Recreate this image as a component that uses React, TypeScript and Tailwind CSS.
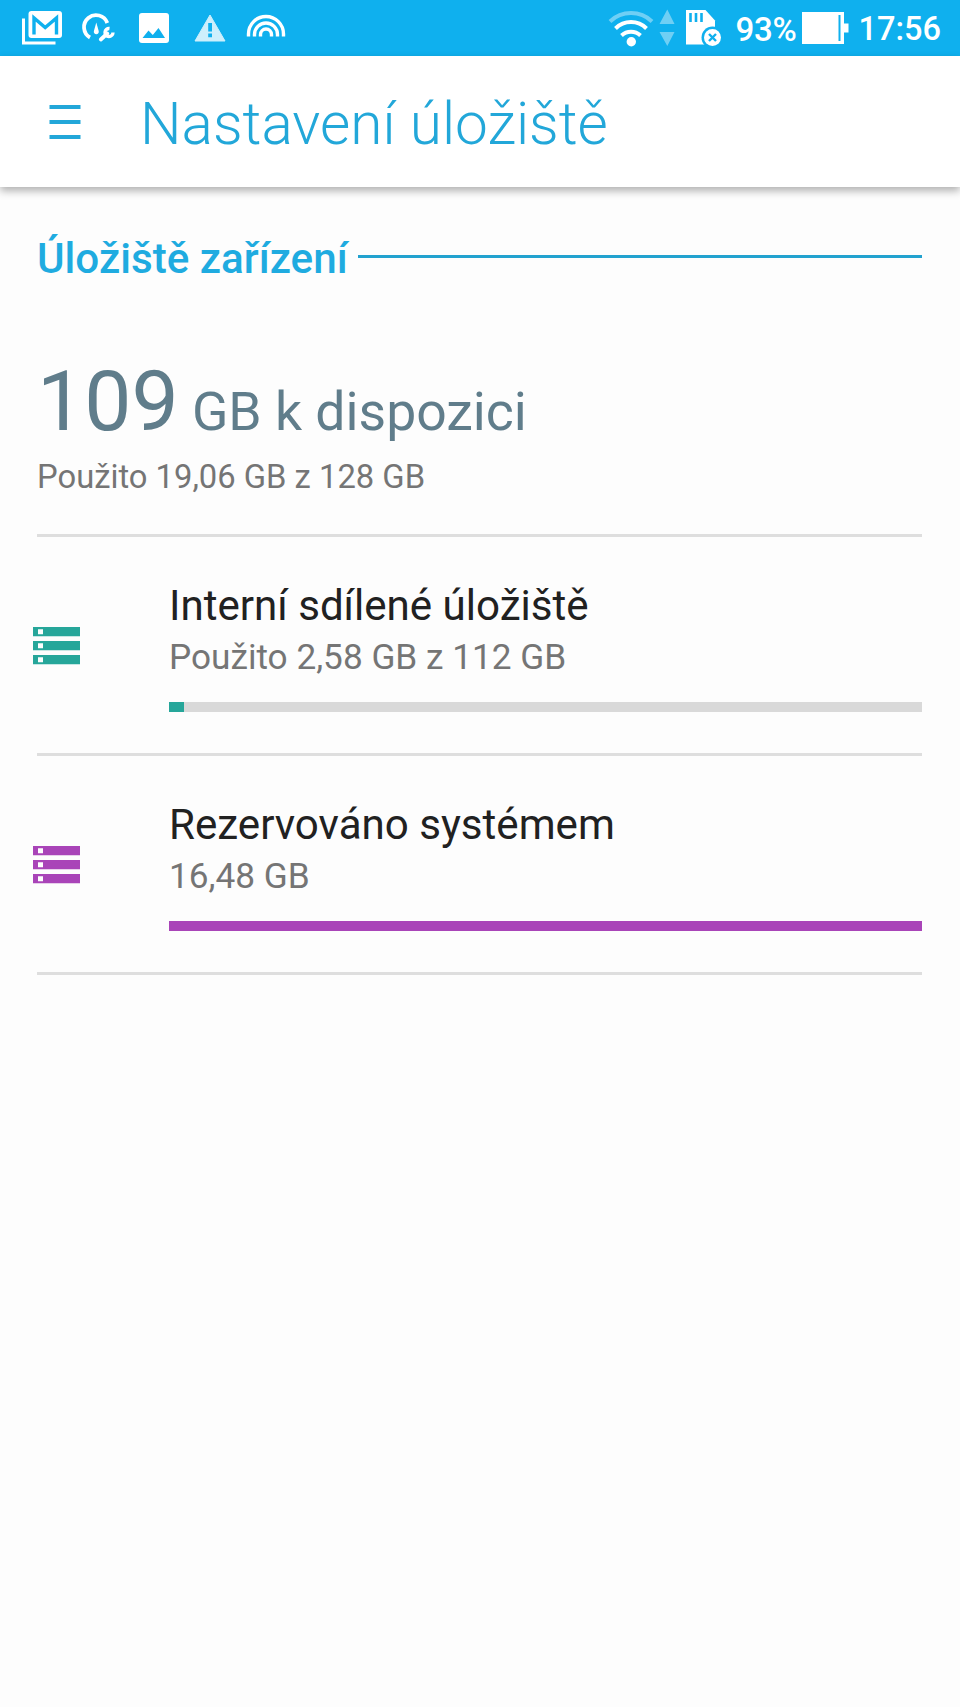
const volumes = [
  {
    name: "Interní sdílené úložiště",
    usage: "Použito 2,58 GB z 112 GB",
    percent: 2.05,
    icon: "text-[#26a69a]",
    bar: "bg-[#26a69a]",
  },
  {
    name: "Rezervováno systémem",
    usage: "16,48 GB",
    percent: 100,
    icon: "text-[#a944b8]",
    bar: "bg-[#a944b8]",
  },
];

function StorageIcon({ className }: { className: string }) {
  return (
    <svg width="48" height="38" viewBox="0 0 48 38" fill="currentColor" className={className}>
      <path fillRule="evenodd" d="M0 0h47v9.3H0zM5 2.3v4.9h5V2.3z" />
      <path fillRule="evenodd" d="M0 14h47v9.3H0zM5 16.3v4.9h5v-4.9z" />
      <path fillRule="evenodd" d="M0 28h47v9.3H0zM5 30.3v4.9h5v-4.9z" />
    </svg>
  );
}

function StatusBar() {
  return (
    <div className="flex h-14 items-center justify-between bg-[#0fb0ee] pr-[19px] pl-5 text-white">
      {/* Notifications */}
      <div className="flex items-center">
        <svg width="60" height="56" viewBox="20 0 60 56" fill="none">
          <path d="M23.5 18.5v24.5h32" stroke="white" strokeWidth="3" />
          <rect x="28.5" y="11" width="33.5" height="27" rx="3" fill="white" />
          <path d="M34 34.5V18l11.2 9.5L56.5 18v16.5" stroke="#0fb0ee" strokeWidth="3.4" />
        </svg>
        <svg width="56" height="56" viewBox="80 0 56 56" fill="none">
          <path d="M90 37.5A12 12 0 1 1 107.3 23" stroke="white" strokeWidth="3.8" />
          <path d="M96.3 22.5l2.4 8.5a2.5 2.5 0 1 1-4.8 0z" fill="white" />
          <path d="M100.8 39.5l6.5-6" stroke="white" strokeWidth="3.8" strokeLinecap="round" />
          <path d="M109.5 28.5a4 4 0 1 0 3.5 4" stroke="white" strokeWidth="3.4" />
        </svg>
        <svg width="56" height="56" viewBox="136 0 56 56">
          <rect x="139" y="13" width="30" height="30" rx="3" fill="white" />
          <path d="M142.5 38l6-7.5 4.3 4.5 5.7-7 6.5 10z" fill="#0fb0ee" />
        </svg>
        <svg width="52" height="56" viewBox="192 0 52 56">
          <path d="M210 15l15 26h-30z" fill="#cdeffc" stroke="#cdeffc" strokeLinejoin="round" />
          <path d="M208.2 23h3.8v8.5h-3.8zM208.2 33.5h3.8v3.8h-3.8z" fill="#0fb0ee" />
        </svg>
        <svg width="48" height="56" viewBox="244 0 48 56" fill="none" stroke="white" strokeWidth="3.4">
          <path d="M248.5 36.5v-2.5a17.5 17.5 0 0 1 35 0v2.5" />
          <path d="M254.5 36.5v-2a11.5 11.5 0 0 1 23 0v2" />
          <path d="M260.5 36.5v-2a5.5 5.5 0 0 1 11 0v2" />
        </svg>
      </div>

      {/* System state */}
      <div className="flex items-center">
        <svg width="48" height="56" viewBox="607 0 48 56" fill="none" stroke="white" strokeWidth="4">
          <path d="M610 21.5a30.5 30.5 0 0 1 42 0" opacity=".4" />
          <path d="M615.5 28.5a22 22 0 0 1 31 0" />
          <path d="M621.5 35.5a14 14 0 0 1 19 0" />
          <circle cx="631.3" cy="41.8" r="4.7" fill="white" stroke="none" />
        </svg>
        <svg width="28" height="56" viewBox="655 0 28 56" fill="white" opacity=".4">
          <path d="M667.3 9.5L674.5 24h-15zM667.3 46L674.5 32h-15z" />
        </svg>
        <svg width="53" height="56" viewBox="683 0 53 56" fill="none">
          <path d="M686 10h19.5l9.5 10.5v24h-29z" fill="white" />
          <path d="M690.5 13v9M696 13v9M701.5 13v9" stroke="#0fb0ee" strokeWidth="2.6" />
          <circle cx="712.5" cy="37.5" r="11" fill="#0fb0ee" />
          <circle cx="712.5" cy="37.5" r="8.5" fill="white" />
          <path d="M709 34l7 7M716 34l-7 7" stroke="#0fb0ee" strokeWidth="2.4" />
        </svg>
        <span className="w-[65px] pt-[3px] text-[33px] leading-none font-medium tracking-[-0.3px]">93%</span>
        <svg width="58" height="56" viewBox="801 0 58 56">
          <path d="M802 12h42v11.5h4.5v9H844V44h-42z" fill="white" />
          <path d="M839.5 15v26" stroke="#0fb0ee" strokeWidth="2" />
        </svg>
        <span className="pt-[3px] text-[32.5px] leading-none font-medium">17:56</span>
      </div>
    </div>
  );
}

export default function App() {
  return (
    <main className="min-h-[1707px] w-[960px] bg-[#fdfdfd] font-[Roboto,sans-serif]">
      <StatusBar />

      <header className="flex h-[131px] items-center bg-white pl-[49px] shadow-[0_4px_8px_rgba(0,0,0,0.3)]">
        <svg width="32" height="34" viewBox="0 0 32 34" className="text-[#22a7d9]" stroke="currentColor" strokeWidth="4">
          <path d="M.5 2h31M.5 17h31M.5 32h31" />
        </svg>
        <h1 className="pt-[5px] pl-[59px] text-[58.5px] leading-none font-light text-[#22a7d9]">Nastavení úložiště</h1>
      </header>

      <section className="pr-[38px] pl-[37px]">
        <div className="flex items-center gap-[10px] pt-[47px]">
          <h2 className="text-[42.2px] leading-[50px] font-medium text-[#1fabe0]">Úložiště zařízení</h2>
          <div className="mb-[5px] h-[3px] flex-1 bg-[#22a2cf]" />
        </div>

        <div className="mt-[76px] text-[#607d8b]">
          <p className="text-[53.5px] leading-[84px]">
            <span className="text-[84px]">109</span> GB k dispozici
          </p>
        </div>
        <p className="mt-[2px] text-[32.75px] leading-[42px] text-[#757575]">Použito 19,06 GB z 128 GB</p>
        <div className="mt-[36px] h-[3px] bg-[#dedede]" />

        {volumes.map((volume) => (
          <div key={volume.name} className="flex h-[219px] border-b-3 border-[#dedede]">
            <div className="-ml-1 w-[136px] pt-[90px]">
              <StorageIcon className={volume.icon} />
            </div>
            <div className="flex-1 pt-[45px]">
              <h3 className="text-[42.1px] leading-[48px] text-[#212121]">{volume.name}</h3>
              <p className="mt-[5px] text-[35.2px] leading-[44px] text-[#757575]">{volume.usage}</p>
              <div className="mt-[23px] h-2.5 bg-[#d9d9d9]">
                <div className={`h-full ${volume.bar}`} style={{ width: `${volume.percent}%` }} />
              </div>
            </div>
          </div>
        ))}
      </section>
    </main>
  );
}
